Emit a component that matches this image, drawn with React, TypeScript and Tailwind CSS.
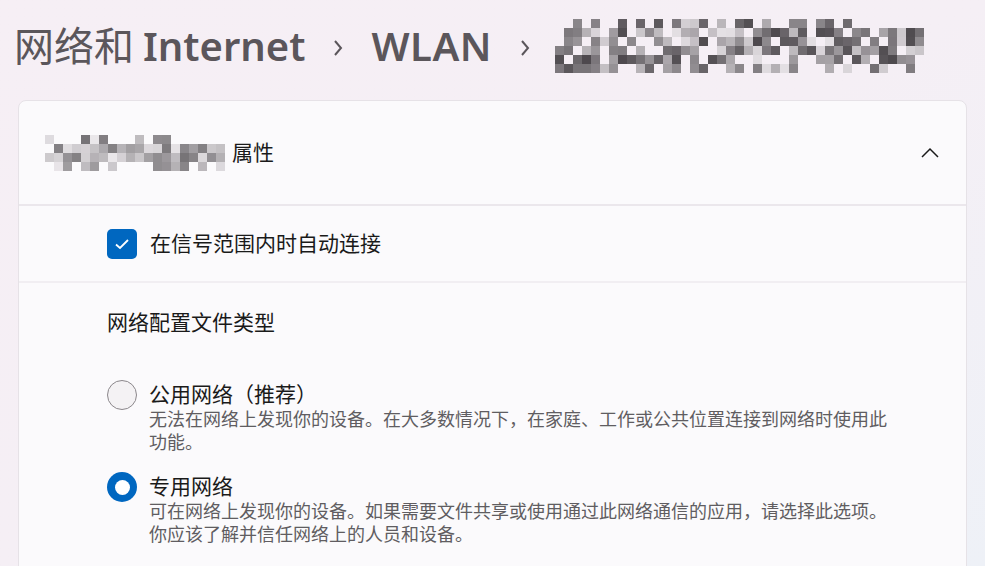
import React from 'react';

// Pixelated (redacted) block, drawn as a grid of grey cells.
function Mosaic({ cols, rows, cell, seed, dense }: { cols: number; rows: number; cell: number; seed: number; dense: number }) {
  let s = seed;
  const rnd = () => {
    s = (s * 9301 + 49297) % 233280;
    return s / 233280;
  };
  const cells: React.ReactNode[] = [];
  for (let r = 0; r < rows; r++) {
    const edge = r === 0 || r === rows - 1;
    for (let c = 0; c < cols; c++) {
      const v = rnd();
      if (edge && v > 0.45) continue;
      if (!edge && v > dense) continue;
      const shade = Math.floor(60 + rnd() * 170);
      cells.push(
        <rect key={`${r}-${c}`} x={c * cell} y={r * cell} width={cell} height={cell} fill={`rgb(${shade},${shade - 4},${shade})`} />
      );
    }
  }
  return (
    <svg width={cols * cell} height={rows * cell} className="block">
      {cells}
    </svg>
  );
}

function Crumb() {
  return (
    <svg width="12" height="20" viewBox="0 0 12 20" className="mx-[27px] mt-[4px] shrink-0">
      <path d="M3 3 L9 10 L3 17" stroke="#5b565b" strokeWidth="2" fill="none" />
    </svg>
  );
}

function Radio({ checked }: { checked: boolean }) {
  return checked ? (
    <span className="w-[30px] h-[30px] rounded-full bg-[#0067c0] flex items-center justify-center shrink-0">
      <span className="w-[15px] h-[15px] rounded-full bg-white" />
    </span>
  ) : (
    <span className="w-[30px] h-[30px] rounded-full border-[1.5px] border-[#8b878b] bg-[#f4f2f4] shrink-0" />
  );
}

export default function App() {
  return (
    <div
      className="w-[985px] h-[566px] overflow-hidden bg-gradient-to-br from-[#f6eff5] via-[#f5eff5] to-[#eef1f7] text-[#1a1a1a]"
      style={{ fontFamily: '"Noto Sans", "Noto Sans CJK SC", sans-serif' }}
    >
      {/* Breadcrumb title */}
      <div className="h-[92px] flex items-center pl-[14px] text-[40px] text-[#5b565b] leading-none whitespace-nowrap">
        <span className="font-normal">网络和</span>
        <span className="font-semibold ml-[9px]">Internet</span>
        <Crumb />
        <span className="font-semibold tracking-[0.5px]">WLAN</span>
        <span className="-mr-[3px]"><Crumb /></span>
        <span className="opacity-90">
          <Mosaic cols={41} rows={6} cell={9} seed={17} dense={0.78} />
        </span>
      </div>

      {/* Card */}
      <div className="mx-[18px] mt-[8px] h-[480px] rounded-[8px] border border-[#e6e2e7] bg-[#fbfafc] overflow-hidden">
        <div className="h-[103px] flex items-center justify-between pl-[26px] pr-[27px]">
          <div className="flex items-center gap-[7px]">
            <span className="opacity-70">
              <Mosaic cols={20} rows={4} cell={9} seed={5} dense={0.95} />
            </span>
            <span className="text-[21px]">属性</span>
          </div>
          <svg width="18" height="11" viewBox="0 0 18 11">
            <path d="M1 10 L9 2 L17 10" stroke="#1a1a1a" strokeWidth="1.5" fill="none" />
          </svg>
        </div>
        <div className="h-[2px] bg-[#ebe7ec]" />

        <div className="h-[75px] flex items-center pl-[88px] gap-[13px]">
          <span className="w-[30px] h-[30px] rounded-[5px] bg-[#0067c0] flex items-center justify-center">
            <svg width="16" height="12" viewBox="0 0 16 12">
              <path d="M2 6.5 L6 10 L14 2" stroke="white" strokeWidth="1.8" fill="none" />
            </svg>
          </span>
          <span className="text-[21px]">在信号范围内时自动连接</span>
        </div>
        <div className="h-[2px] bg-[#f1eef2]" />

        <div className="pl-[88px] pt-[24px]">
          <div className="text-[21px] leading-[30px]">网络配置文件类型</div>

          <div className="mt-[43px] flex gap-[12px]">
            <Radio checked={false} />
            <div>
              <div className="text-[21px] leading-[28px]">公用网络（推荐）</div>
              <div className="text-[18px] leading-[23px] text-[#605d61]">
                无法在网络上发现你的设备。在大多数情况下，在家庭、工作或公共位置连接到网络时使用此
                <br />
                功能。
              </div>
            </div>
          </div>

          <div className="mt-[18px] flex gap-[12px]">
            <Radio checked />
            <div>
              <div className="text-[21px] leading-[28px]">专用网络</div>
              <div className="text-[18px] leading-[23px] text-[#605d61]">
                可在网络上发现你的设备。如果需要文件共享或使用通过此网络通信的应用，请选择此选项。
                <br />
                你应该了解并信任网络上的人员和设备。
              </div>
            </div>
          </div>
        </div>
      </div>
    </div>
  );
}
